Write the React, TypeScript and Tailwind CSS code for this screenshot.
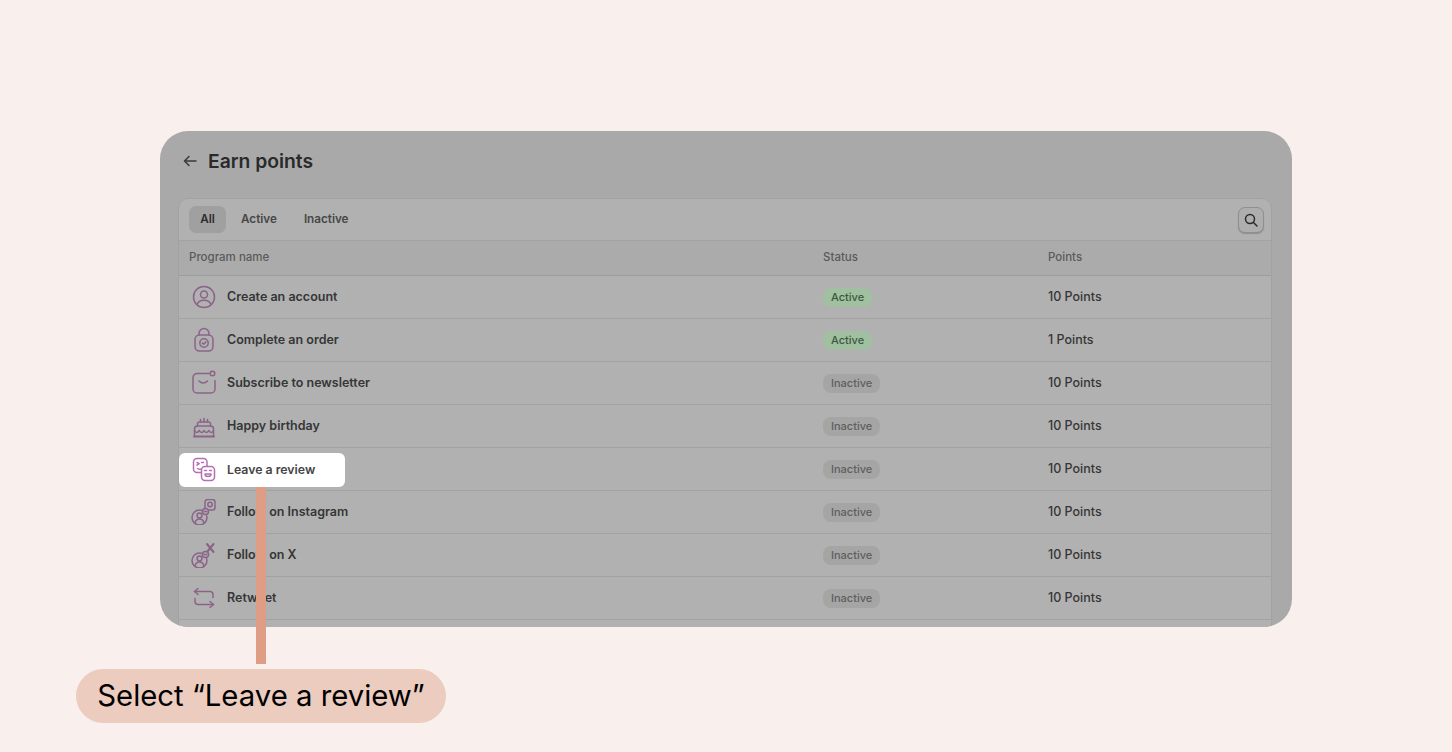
const programs = [
  { name: 'Create an account', status: 'Active', points: '10 Points', icon: 'user' },
  { name: 'Complete an order', status: 'Active', points: '1 Points', icon: 'bag' },
  { name: 'Subscribe to newsletter', status: 'Inactive', points: '10 Points', icon: 'mail' },
  { name: 'Happy birthday', status: 'Inactive', points: '10 Points', icon: 'cake' },
  { name: 'Leave a review', status: 'Inactive', points: '10 Points', icon: 'review' },
  { name: 'Follow on Instagram', status: 'Inactive', points: '10 Points', icon: 'instagram' },
  { name: 'Follow on X', status: 'Inactive', points: '10 Points', icon: 'x' },
  { name: 'Retweet', status: 'Inactive', points: '10 Points', icon: 'retweet' },
]

function FollowBase() {
  return (
    <>
      <circle cx="8.5" cy="18.5" r="7.5" />
      <circle cx="8.5" cy="16.5" r="2.4" />
      <path d="M4 24c.6-2.800 2.500-4 4.500-4s3.900 1.200 4.500 4" />
      <circle cx="14.5" cy="12.5" r="3" fill="#b0b0b0" />
      <path d="M13.300 12.500h2.400" />
    </>
  )
}

function ProgramIcon({ icon, className = 'text-[#8a6488]' }: { icon: string; className?: string }) {
  return (
    <svg width="26" height="26" viewBox="0 0 26 26" fill="none" stroke="currentColor" strokeWidth="1.5" strokeLinecap="round" strokeLinejoin="round" className={className}>
      {icon === 'user' && (
        <>
          <circle cx="13" cy="13" r="10.500" />
          <circle cx="13" cy="10.500" r="3.500" />
          <path d="M6 20.500c1-3 3.800-4.300 7-4.300s6 1.300 7 4.300" />
        </>
      )}
      {icon === 'bag' && (
        <>
          <rect x="4" y="8" width="18" height="16" rx="4.500" />
          <path d="M8 8V6.500a5 5 0 0 1 10 0V8" />
          <circle cx="13" cy="16" r="4.200" />
          <path d="M11.300 16l1.300 1.300 2.200-2.400" />
        </>
      )}
      {icon === 'mail' && (
        <>
          <path d="M18 3.500H6a4 4 0 0 0-4 4v11.500a4 4 0 0 0 4 4h14a4 4 0 0 0 4-4v-8.500" />
          <circle cx="21.500" cy="3.500" r="2.300" />
          <path d="M8 11c2.500 2.600 6 2.600 8.500 0" />
        </>
      )}
      {icon === 'cake' && (
        <>
          <path d="M3 23.500h20" strokeWidth="2" />
          <path d="M3.500 23.500v-7.500a3 3 0 0 1 3-3h13a3 3 0 0 1 3 3v7.500" />
          <path d="M6.500 13v-2a2 2 0 0 1 2-2h9a2 2 0 0 1 2 2v2" />
          <path d="M3.500 17.500c1.500 2.800 3 2.800 4.800 0 1.500 2.800 3.300 2.800 4.700 0 1.500 2.800 3.300 2.800 4.800 0 1.600 2.800 3.200 2.800 4.700 0" />
          <path d="M9.500 9V6.500M13 9V5.500M16.500 9V6.500" />
        </>
      )}
      {icon === 'review' && (
        <>
          <rect x="2.500" y="1.500" width="13.500" height="14" rx="3.500" />
          <path d="M6 5.500l2.200 1.200L6 8M12.500 5.500h-2M6.500 11.500c1.500 1 3.500 1 5 0" />
          <rect x="10.500" y="9.500" width="13" height="14" rx="3.500" fill="white" />
          <path d="M13.500 13.500h2M18.500 13.500h2M14 17h6c0 3.400-6 3.400-6 0z" />
        </>
      )}
      {icon === 'instagram' && (
        <>
          <rect x="14" y="0.500" width="10" height="10.500" rx="2.500" />
          <circle cx="19" cy="5.500" r="2.200" />
          <FollowBase />
        </>
      )}
      {icon === 'x' && (
        <>
          <path d="M16 2l6.500 8M22.500 2L16 10" strokeWidth="2" />
          <FollowBase />
        </>
      )}
      {icon === 'retweet' && (
        <>
          <path d="M7 3.500L3.500 6.500 7 9.500" />
          <path d="M3.500 6.500h16a3 3 0 0 1 2.500 3v3" />
          <path d="M19 16.500l3.500 3-3.500 3" />
          <path d="M22.500 19.500h-16a3 3 0 0 1-2.500-3v-3" />
        </>
      )}
    </svg>
  )
}

export default function App() {
  return (
    <div className="relative h-[752px] w-[1452px] overflow-hidden bg-[#f9efec] font-['Inter',sans-serif]">
      <div className="ml-[160px] mt-[131px] h-[496px] w-[1132px] overflow-hidden rounded-[28px] bg-[#a9a9a9] px-[18px]">
        <div className="flex h-[67px] items-start pt-[18px]">
          <svg width="20" height="24" viewBox="0 0 20 24" fill="none" stroke="#3a3a3a" strokeWidth="1.5" strokeLinecap="round" strokeLinejoin="round" className="ml-[2px]">
            <path d="M16 12H4.500M9 7.500L4.500 12 9 16.500" />
          </svg>
          <h1 className="ml-[8px] text-[19.3px] font-semibold leading-[24px] text-[#2a2a2a]">Earn points</h1>
        </div>
        <div className="h-[500px] w-[1094px] rounded-t-[10px] border border-[#a2a2a2] bg-[#b1b1b1]">
          <div className="flex h-[42px] items-center border-b border-[#a2a2a2] pl-[10px] pr-[7px]">
            <div className="flex h-[27px] w-[37px] items-center justify-center rounded-[7px] bg-[#a0a0a0] text-[11.7px] font-semibold text-[#2c2c2c]">All</div>
            <div className="ml-[15px] text-[11.7px] font-semibold text-[#474747]">Active</div>
            <div className="ml-[27px] text-[11.7px] font-semibold text-[#474747]">Inactive</div>
            <button className="ml-auto flex h-[26px] w-[26px] items-center justify-center rounded-[7px] border border-[#8f8f8f] bg-[#aeaeae] shadow-[0_1px_1px_#8f8f8f]">
              <svg width="16" height="16" viewBox="0 0 16 16" fill="none" stroke="#2b2b2b" strokeWidth="1.5" strokeLinecap="round">
                <circle cx="7" cy="7" r="4.500" />
                <path d="M10.500 10.500L14 14" />
              </svg>
            </button>
          </div>
          <div className="grid h-[35px] grid-cols-[634px_225px_1fr] items-center border-b border-[#9d9d9d] bg-[#ababab] pl-[10px] text-[11.5px] font-medium text-[#5a5a5a]">
            <div>Program name</div>
            <div>Status</div>
            <div>Points</div>
          </div>
          {programs.map(p => (
            <div key={p.name} className="grid h-[43px] grid-cols-[634px_225px_1fr] items-center border-b border-[#a2a2a2] pl-[10px] text-[12.5px]">
              <div className="flex items-center">
                <div className="ml-[2px] flex w-[26px] justify-center"><ProgramIcon icon={p.icon} /></div>
                <span className="ml-[10px] font-semibold text-[#363636]">{p.name}</span>
              </div>
              <div>
                {p.status === 'Active' ? (
                  <span className="inline-block rounded-[8px] bg-[#a0c0a1] px-[8px] text-[11px] font-medium leading-[19px] text-[#3a5a3c]">{p.status}</span>
                ) : (
                  <span className="inline-block rounded-[8px] bg-[#a5a5a5] px-[8px] text-[11px] font-medium leading-[19px] text-[#5e5e5e]">{p.status}</span>
                )}
              </div>
              <div className="font-medium text-[#363636]">{p.points}</div>
            </div>
          ))}
        </div>
      </div>

      {/* spotlight over the table */}
      <div className="absolute left-[179px] top-[453px] flex h-[34px] w-[166px] items-center rounded-[6px] bg-white pl-[12px] text-[12.3px]">
        <ProgramIcon icon="review" className="text-[#b56fb3]" />
        <span className="ml-[10px] font-semibold text-[#444444]">Leave a review</span>
      </div>
      <div className="absolute left-[256px] top-[487px] h-[177px] w-[10px] bg-[#df9d85]" />

      <div className="ml-[76px] mt-[42px] flex h-[54px] w-[370px] items-center justify-center rounded-[27px] bg-[#edccc0] text-[29.3px] font-normal text-black">
        Select “Leave a review”
      </div>
    </div>
  )
}
